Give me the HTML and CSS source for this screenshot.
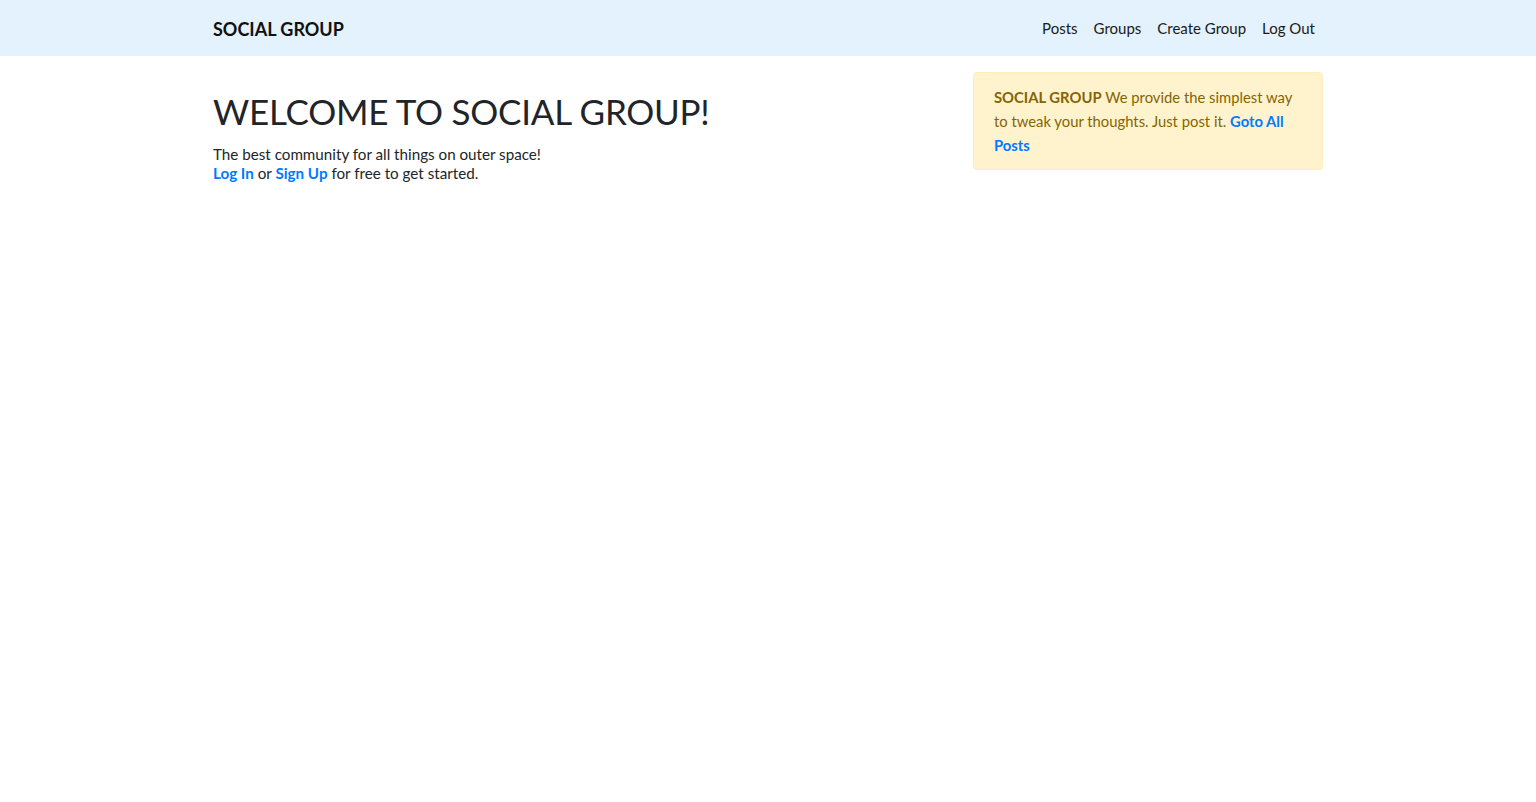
FILE: index.html
```html
<!DOCTYPE html>
<html lang="en">
<head>
<meta charset="utf-8">
<title>Social Group</title>
<link rel="stylesheet" href="styles.css">
</head>
<body>
<nav class="navbar">
  <div class="container nav-inner">
    <a class="brand" href="#">SOCIAL GROUP</a>
    <ul class="nav-links">
      <li><a href="#">Posts</a></li>
      <li><a href="#">Groups</a></li>
      <li><a href="#">Create Group</a></li>
      <li><a href="#">Log Out</a></li>
    </ul>
  </div>
</nav>
<main class="container main">
  <section class="intro">
    <h1 class="title">WELCOME TO SOCIAL GROUP!</h1>
    <p class="lead-text">The best community for all things on outer space!<br>
    <a class="link" href="#">Log In</a> or <a class="link" href="#">Sign Up</a> for free to get started.</p>
  </section>
  <aside class="side">
    <div class="alert"><strong>SOCIAL GROUP</strong> We provide the simplest way to tweak your thoughts. Just post it. <a class="link" href="#">Goto All Posts</a></div>
  </aside>
</main>
</body>
</html>
```
FILE: styles.css
```css
* { box-sizing: border-box; }
html, body { margin: 0; padding: 0; }
body {
  font-family: Lato, "Open Sans", sans-serif;
  font-size: 16px;
  line-height: 1.5;
  color: #212529;
  background: #fff;
}
.container {
  width: 1140px;
  margin: 0 auto;
  padding: 0 15px;
}
.navbar {
  background: #e3f2fd;
  height: 56px;
}
.nav-inner {
  display: flex;
  align-items: center;
  justify-content: space-between;
  height: 56px;
}
.brand {
  font-size: 18px;
  font-weight: 700;
  color: #111;
  text-decoration: none;
  padding-top: 2px;
}
.nav-links {
  display: flex;
  list-style: none;
  margin: 0;
  padding: 0;
}
.nav-links a {
  display: block;
  padding: 8px;
  color: #1a1a1a;
  font-size: 15px;
  text-decoration: none;
}
.main {
  display: flex;
  margin-top: 16px;
}
.intro {
  flex: 0 0 760px;
}
.side {
  flex: 0 0 350px;
}
.title {
  margin: 15px 0 10px;
  font-size: 35px;
  font-weight: 400;
  line-height: 48px;
  letter-spacing: -0.25px;
  color: #212529;
}
.lead-text {
  margin: 0;
  font-size: 15.2px;
  line-height: 19px;
}
.link {
  color: #007bff;
  font-weight: 700;
  text-decoration: none;
}
.alert {
  background: #fff3cd;
  border: 1px solid #ffeeba;
  color: #856404;
  border-radius: 4px;
  padding: 12px 20px;
  font-size: 14.8px;
  line-height: 24px;
}
.alert strong { font-weight: 700; }
```
